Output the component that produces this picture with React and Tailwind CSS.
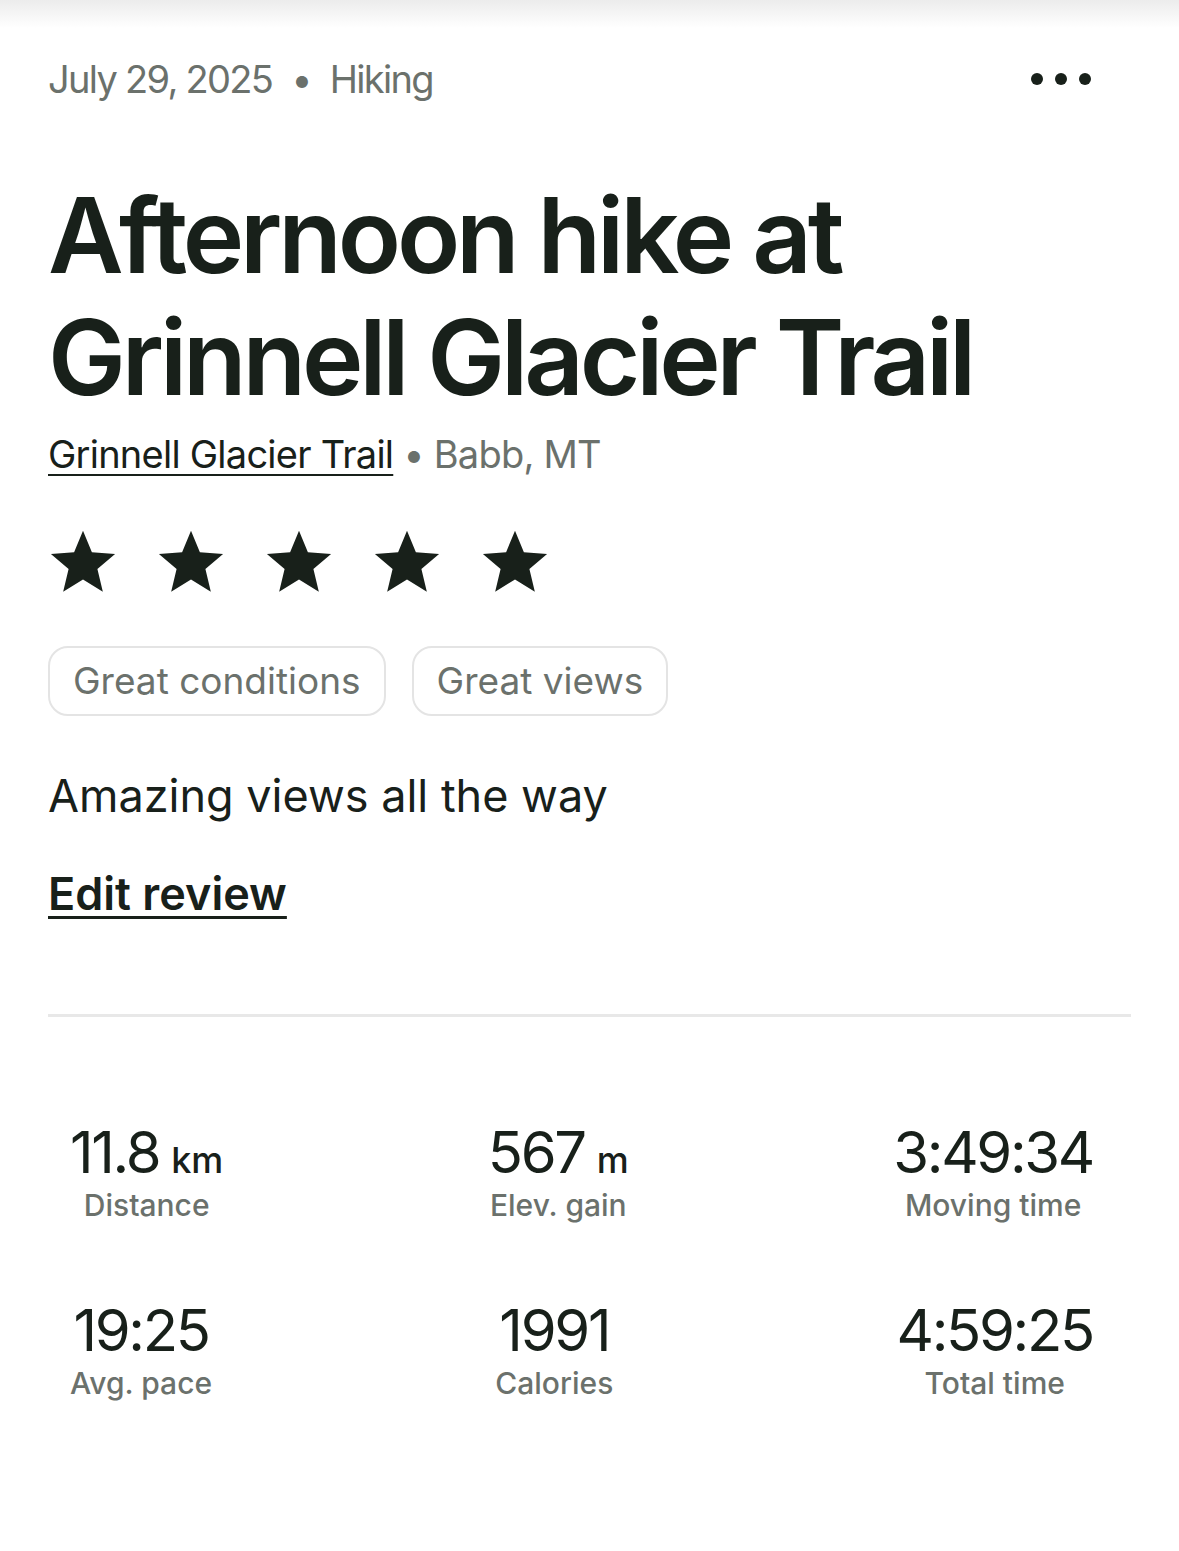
import React from 'react';

const Star = () => (
    <svg viewBox="0 0 24 24" className="w-[70px] h-[70px] fill-[#18201a]">
        <path d="M12 1.6l3.05 7.36 7.95.62-6.06 5.17 1.86 7.75L12 18.36 5.2 22.5l1.86-7.75L1 9.58l7.95-.62z" />
    </svg>
);

const Stat = ({ value, unit, label }) => (
    <div className="flex flex-col items-center">
        <div className="h-[64px] flex items-baseline text-[58px] leading-[64px] text-[#18201a] tracking-[-0.04em]">
            <span>{value}</span>
            {unit && <span className="text-[36px] leading-none font-medium tracking-normal ml-3">{unit}</span>}
        </div>
        <div className="mt-[4px] text-[30px] leading-[34px] font-medium text-[#6b716c]">{label}</div>
    </div>
);

export default function App() {
    return (
        <div className="min-h-screen bg-white font-['Inter',sans-serif] text-[#18201a]">
            <div className="h-7 bg-gradient-to-b from-[#ececec] to-white"></div>

            <div className="px-12">
                <div className="flex items-center justify-between mt-[26px] h-[50px]">
                    <div className="text-[38px] text-[#6b716c] tracking-[-0.045em]">
                        July 29, 2025 <span className="mx-[10px]">•</span> Hiking
                    </div>
                    <div className="flex items-center gap-3 mr-[40px]">
                        <span className="w-3 h-3 rounded-full bg-[#18201a]"></span>
                        <span className="w-3 h-3 rounded-full bg-[#18201a]"></span>
                        <span className="w-3 h-3 rounded-full bg-[#18201a]"></span>
                    </div>
                </div>

                <h1 className="mt-[70px] text-[104px] leading-[122px] font-semibold tracking-[-0.04em]">
                    Afternoon hike at<br />Grinnell Glacier Trail
                </h1>

                <div className="mt-[12px] text-[38px] leading-[48px] tracking-[-0.02em]">
                    <a className="underline decoration-2 underline-offset-[6px] text-[#18201a]">Grinnell Glacier Trail</a>
                    <span className="text-[#6b716c]"> • Babb, MT</span>
                </div>

                <div className="mt-[48px] flex gap-[38px]">
                    <Star /><Star /><Star /><Star /><Star />
                </div>

                <div className="mt-[50px] flex gap-[26px]">
                    <span className="h-[70px] px-[23px] flex items-center rounded-[20px] border-2 border-[#e4e4e4] text-[37px] text-[#6b716c]">Great conditions</span>
                    <span className="h-[70px] px-[23px] flex items-center rounded-[20px] border-2 border-[#e4e4e4] text-[37px] text-[#6b716c]">Great views</span>
                </div>

                <p className="mt-[52px] text-[45px] leading-[56px]">Amazing views all the way</p>

                <a className="block mt-[42px] text-[45px] leading-[56px] font-semibold underline decoration-[3px] underline-offset-[6px]">Edit review</a>

                <div className="mt-[92px] h-[3px] bg-[#e8e8e8]"></div>

                <div className="pl-[22px] pr-[38px] pt-[103px]">
                    <div className="flex justify-between">
                        <Stat value="11.8" unit="km" label="Distance" />
                        <Stat value="567" unit="m" label="Elev. gain" />
                        <Stat value="3:49:34" label="Moving time" />
                    </div>
                    <div className="flex justify-between mt-[76px]">
                        <Stat value="19:25" label="Avg. pace" />
                        <Stat value="1991" label="Calories" />
                        <Stat value="4:59:25" label="Total time" />
                    </div>
                </div>
            </div>
        </div>
    );
}
